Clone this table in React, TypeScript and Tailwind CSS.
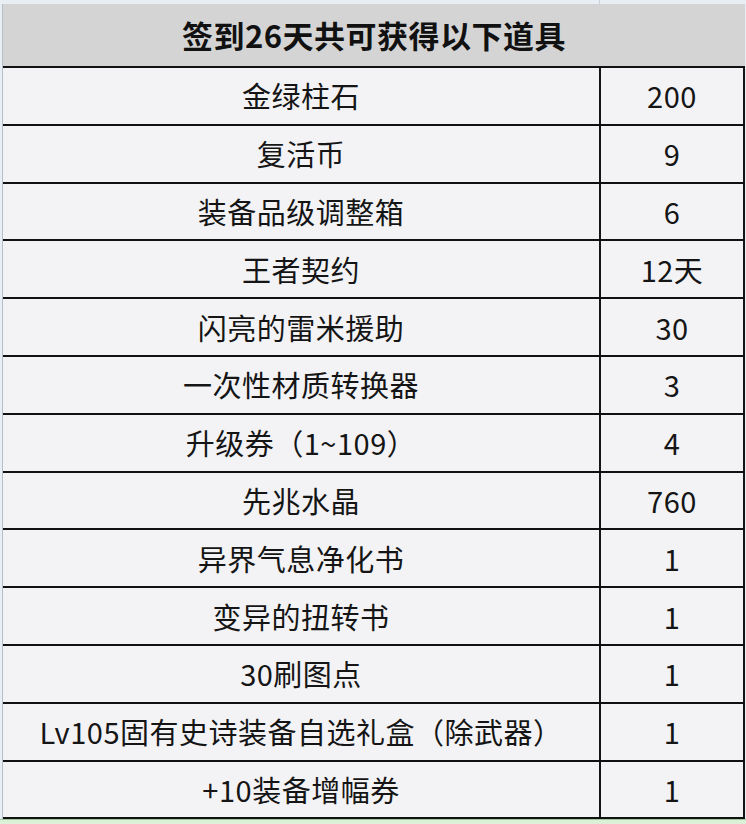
import React from "react";

const items: [string, string][] = [
  ["金绿柱石", "200"],
  ["复活币", "9"],
  ["装备品级调整箱", "6"],
  ["王者契约", "12天"],
  ["闪亮的雷米援助", "30"],
  ["一次性材质转换器", "3"],
  ["升级券（1~109）", "4"],
  ["先兆水晶", "760"],
  ["异界气息净化书", "1"],
  ["变异的扭转书", "1"],
  ["30刷图点", "1"],
  ["Lv105固有史诗装备自选礼盒（除武器）", "1"],
  ["+10装备增幅券", "1"],
];

const App = () => {
  return (
    <div
      className="w-[746px] h-[824px] overflow-hidden bg-[#e9eef4] flex flex-col"
      style={{ fontFamily: '"Noto Sans CJK SC", "Noto Sans", sans-serif' }}
    >
      {/* grid line above the table */}
      <div className="h-[4px] flex shrink-0">
        <div className="w-[600px] border-r border-[#c9d2dc]" />
        <div className="flex-1" />
      </div>

      <div className="flex flex-col ml-[2px] border-l border-[#b4bfcb] w-[743px]">
        <div className="h-[64px] bg-[#d4d4d4] border-b-2 border-[#111] flex items-center justify-center">
          <span className="text-[31px] font-bold text-[#111] tracking-[0.5px] leading-none -mt-[2px]">
            签到26天共可获得以下道具
          </span>
        </div>

        {items.map(([name, count]) => (
          <div key={name} className="h-[57.8px] flex border-b-2 border-[#111] bg-[#f3f3f5]">
            <div className="w-[596px] flex items-center justify-center text-[29px] tracking-[0.5px] text-[#151515] leading-none">
              {name}
            </div>
            <div className="flex-1 border-l-2 border-r-2 border-[#151515] flex items-center justify-center text-[29px] tracking-[0.5px] text-[#151515] leading-none">
              {count}
            </div>
          </div>
        ))}
      </div>

      <div className="flex-1 bg-[#dcefd9] border-t border-[#9cc79a]" />
    </div>
  );
};

export default App;
